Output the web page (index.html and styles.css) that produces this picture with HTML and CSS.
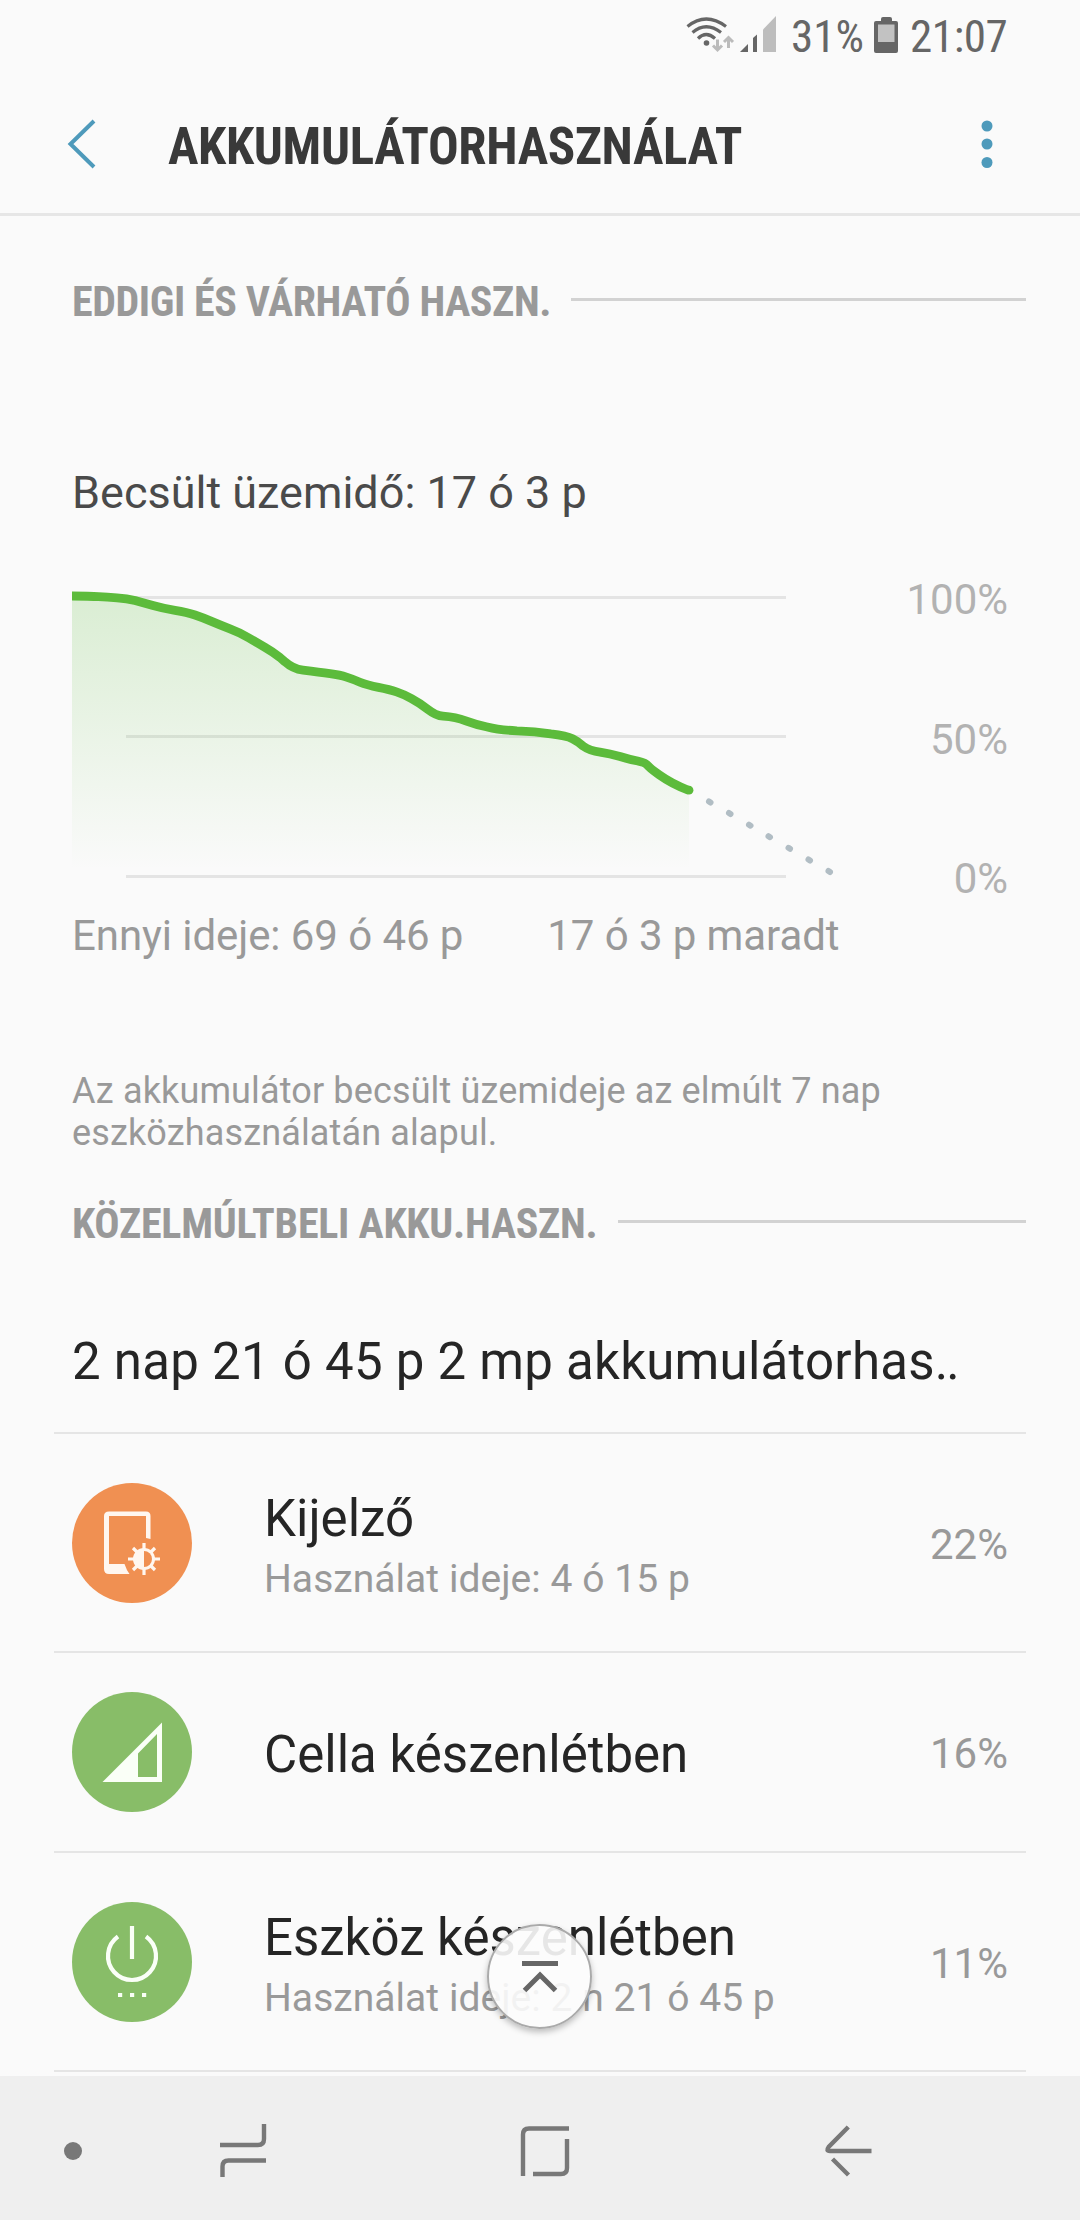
FILE: index.html
```html
<!DOCTYPE html>
<html lang="hu">
<head>
<meta charset="utf-8">
<title>Akkumulátorhasználat</title>
<link rel="stylesheet" href="styles.css">
</head>
<body>
<div class="screen">
  <div class="status">
    <svg class="status-icons" width="92" height="40" viewBox="0 0 92 40">
      <g fill="none" stroke="#666" stroke-width="3.2">
        <path d="M1.500 10.500Q20 -4.500 40 10.500"/>
        <path d="M6.500 16.500Q20 5 35 16.500"/>
        <path d="M12 22.500Q20 14.500 29 22.500"/>
      </g>
      <circle cx="20.500" cy="27" r="2.800" fill="#666"/>
      <g fill="none" stroke="#bbb" stroke-width="3">
        <path d="M31.500 23.500v10M27 29.500l4.500 4.500 4.500-4.500"/>
        <path d="M42.500 32v-10M38 26l4.500-4.500 4.500 4.500"/>
      </g>
      <path d="M54 36h8v-8z" fill="#666"/>
      <path d="M67 36v-14l4-3.500v17.500z" fill="#666"/>
      <path d="M77 36v-22.500l13-13.500v36z" fill="#bdbdbd"/>
    </svg>
    <span class="status-pct">31%</span>
    <svg class="battery" width="24" height="36" viewBox="0 0 24 36">
      <path d="M2 4h5V2a2 2 0 0 1 2-2h7a2 2 0 0 1 2 2v2h4a2 2 0 0 1 2 2v28a2 2 0 0 1-2 2H2a2 2 0 0 1-2-2V6a2 2 0 0 1 2-2z" fill="#666"/>
      <path d="M4 7.500h16.500v17.500H4z" fill="#c2c2c2"/>
    </svg>
    <span class="status-time">21:07</span>
  </div>
  <header class="bar">
    <svg class="back" width="30" height="50" viewBox="0 0 30 50"><path d="M27 2L3.500 25 27 48" fill="none" stroke="#4e9abb" stroke-width="4"/></svg>
    <h1 class="title">AKKUMULÁTORHASZNÁLAT</h1>
    <svg class="more" width="12" height="48" viewBox="0 0 12 48" fill="#4e9abb"><circle cx="6" cy="6" r="5.500"/><circle cx="6" cy="24" r="5.500"/><circle cx="6" cy="42.500" r="5.500"/></svg>
  </header>
  <main>
    <div class="section section-first"><h2 class="section-title">EDDIGI ÉS VÁRHATÓ HASZN.</h2><span class="rule"></span></div>
    <p class="estimate">Becsült üzemidő: 17 ó 3 p</p>
    <div class="chart">
      <svg width="780" height="300" viewBox="60 580 780 300">
        <defs><linearGradient id="fade" gradientUnits="userSpaceOnUse" x1="0" y1="600" x2="0" y2="870"><stop offset="0" stop-color="#5cbc3a" stop-opacity=".2"/><stop offset="1" stop-color="#5cbc3a" stop-opacity="0"/></linearGradient></defs>
        <path d="M126 597.500H786M126 736.500H786M126 876.500H786" stroke="#e4e4e4" stroke-width="3"/>
        <path fill="url(#fade)" d="M72 596L90 596 107 597.300 127 598.300 143 602.700 163 608.500 187 612.300 203 617.700 220 625 240 632.700 257 642.700 273 652 287 663 298 669 320 672.300 340 675 353 679.300 367 685 390 689.700 403 694 420 703.300 438 714.500 456 717.700 475.600 724 499 729 535 732 566.500 735.700 578.400 741.700 590 749.700 610 753.700 630 759.300 645.600 762.700 649.600 768 669 781.700 689 790V870H72z"/>
        <path fill="none" stroke="#5cbb3b" stroke-width="8.800" stroke-linejoin="round" d="M72 596Q90 596 98.500 596.700Q107 597.300 117 597.800Q127 598.300 135 600.500Q143 602.700 153 605.600Q163 608.500 175 610.400Q187 612.300 195 615Q203 617.700 211.500 621.400Q220 625 230 628.900Q240 632.700 248.500 637.700Q257 642.700 265 647.400Q273 652 280 657.500L285 661.800Q293 669 303 670.200Q320 672.300 330 673.700Q340 675 346.500 677.200Q353 679.300 360 682.200Q367 685 378.500 687.400Q390 689.700 396.500 691.900Q403 694 411.500 698.700Q420 703.300 428 709.500Q436 715.700 443 716.200Q456 717 465.800 720.900Q475.600 724.600 487.300 727Q499 730 517 730.800Q535 731.200 550.800 733.900Q566.500 735.700 572.500 738.700Q578.400 741.700 583 746Q590 751 600 752.100Q610 753.700 620 756.500Q630 759.700 637.800 761Q645.600 762.700 647.600 765.400Q649.600 768 659.300 774.900Q672 784 689 790.500"/>
        <circle cx="689" cy="790.200" r="4.400" fill="#5cbb3b"/>
        <path d="M709 801.500l1.500 1M729 813l1.500 1M749 824.700l1.500 1M768.500 836.200l1.500 1M788.500 847.800l1.500 1M808.500 859.500l1.500 1M828.500 871l1.500 1" stroke="#b1bdc4" stroke-width="6" stroke-linecap="round"/>
      </svg>
      <div class="scale"><span>100%</span><span>50%</span><span>0%</span></div>
    </div>
    <div class="legend"><span>Ennyi ideje: 69 ó 46 p</span><span>17 ó 3 p maradt</span></div>
    <p class="note">Az akkumulátor becsült üzemideje az elmúlt 7 nap eszközhasználatán alapul.</p>
    <div class="section section-second"><h2 class="section-title">KÖZELMÚLTBELI AKKU.HASZN.</h2><span class="rule"></span></div>
    <p class="summary">2 nap 21 ó 45 p 2 mp akkumulátorhas<span class="dots">..</span></p>
    <ul class="list">
      <li class="row">
        <svg class="icon" width="120" height="120" viewBox="0 0 120 120">
          <circle cx="60" cy="60" r="60" fill="#f09052"/>
          <path d="M37 28.500h37q4.500 0 4.500 4.500v23l-4.500-1V33H37v48h15.500q2 6 5 10H37q-5 0-5-5V33q0-4.500 5-4.500z" fill="#fff7f0"/>
          <g stroke="#fff7f0" stroke-width="3.200"><path d="M72 60v32M56 76h32M61 65l22 22M83 65L61 87"/></g>
          <circle cx="72" cy="76" r="11" fill="#fff7f0"/>
          <path d="M72 68a8 8 0 0 1 0 16z" fill="#f09052"/>
        </svg>
        <div class="text"><div class="name">Kijelző</div><div class="sub">Használat ideje: 4 ó 15 p</div></div>
        <span class="pct">22%</span>
      </li>
      <li class="row row-short">
        <svg class="icon" width="120" height="120" viewBox="0 0 120 120">
          <circle cx="60" cy="60" r="60" fill="#88bd68"/>
          <path fill-rule="evenodd" d="M30.500 90L90 30.500V90zM66 85h19V42L66 61.500z" fill="#fafff7"/>
        </svg>
        <div class="text"><div class="name">Cella készenlétben</div></div>
        <span class="pct">16%</span>
      </li>
      <li class="row">
        <svg class="icon" width="120" height="120" viewBox="0 0 120 120">
          <circle cx="60" cy="60" r="60" fill="#88bd68"/>
          <path d="M60 24v33M46 34.500a24 24 0 1 0 28 0" fill="none" stroke="#fafff7" stroke-width="4.200"/>
          <path d="M46 91h4.200v4H46zM58 91h4.200v4H58zM70 91h4.200v4H70z" fill="#fafff7"/>
        </svg>
        <div class="text"><div class="name">Eszköz készenlétben</div><div class="sub">Használat ideje: 2 n 21 ó 45 p</div></div>
        <span class="pct">11%</span>
      </li>
    </ul>
  </main>
  <div class="to-top">
    <svg width="36" height="32" viewBox="0 0 36 32" fill="none" stroke="#666"><path d="M0 2.500h36" stroke-width="5"/><path d="M2.500 29.500L18 14l15.500 15.500" stroke-width="5"/></svg>
  </div>
  <nav class="nav">
    <svg width="1080" height="144" viewBox="0 0 1080 144" fill="none" stroke="#787878" stroke-width="4.400">
      <circle cx="73" cy="75" r="9" fill="#787878" stroke="none"/>
      <path d="M220 69h38q6 0 6-6V48M266 84.500h-37.500q-6 0-6 6V101"/>
      <path d="M569 52.500h-40q-6 0-6 6V100M533 98h28q6 0 6-6V63"/>
      <path d="M848.300 51L828.600 71Q825.500 75 830 75H871.500M832.500 83l16 16"/>
    </svg>
  </nav>
</div>
</body>
</html>
```
FILE: styles.css
```css
* { box-sizing: border-box; margin: 0; padding: 0; }
body { background: #fafafa; font-family: Roboto, sans-serif; }
.screen { position: relative; width: 1080px; height: 2220px; overflow: hidden; display: flex; flex-direction: column; background: #fafafa; }

.status { height: 72px; display: flex; align-items: flex-start; padding: 16px 0 0 686px; color: #666; font: 45px/42px "Roboto Condensed", Roboto, sans-serif; }
.status-pct { width: 72px; margin-left: 13px; }
.battery { margin: 1px 12px 0 11px; }
.status-time { white-space: nowrap; letter-spacing: -.4px; }

.bar { height: 144px; display: flex; align-items: center; padding: 3px 87px 0 67px; border-bottom: 3px solid #e6e6e6; }
.title { flex: 1; margin-left: 71px; padding-top: 5px; font: bold 51px/60px "Roboto Condensed", Roboto, sans-serif; letter-spacing: -.35px; color: #393939; white-space: nowrap; }

main { flex: 1; min-height: 0; }
.section { display: flex; align-items: center; padding: 0 54px 0 72px; height: 50px; }
.section-first { margin-top: 59px; }
.section-title { padding-top: 4px; font: bold 42px/50px "Roboto Condensed", Roboto, sans-serif; color: #999; white-space: nowrap; }
.section-first .section-title { letter-spacing: -.42px; }
.section-second .section-title { letter-spacing: -.26px; }
.rule { flex: 1; height: 3px; margin: 0 0 2px 20px; background: #d2d2d2; }
.estimate { margin: 143px 0 0 72px; font-size: 45px; line-height: 50px; color: #4a4a4a; }
.chart { display: flex; margin: 62px 72px 0 60px; height: 300px; }
.scale { flex: 1; display: flex; flex-direction: column; align-items: flex-end; font-size: 42px; line-height: 50px; color: #b2b2b2; margin-top: -5px; gap: 89.500px; }
.legend { display: flex; gap: 84px; padding-left: 72px; margin-top: 31px; font-size: 42px; line-height: 50px; letter-spacing: -.08px; color: #999; }
.note { margin: 109px 180px 0 72px; font-size: 36px; line-height: 42px; letter-spacing: .14px; color: #999; }
.section-second { margin-top: 43px; }
.summary { margin: 85px 0 0 72px; font-size: 51px; line-height: 60px; letter-spacing: .25px; color: #252525; height: 100px; }
.dots { letter-spacing: -2px; }

.list { list-style: none; margin: 0 54px; border-top: 2px solid #e5e5e5; }
.row { height: 219px; display: flex; align-items: center; padding: 0 18px; border-bottom: 2px solid #e5e5e5; }
.row-short { height: 200px; }
.icon { flex: none; }
.text { flex: 1; margin-left: 72px; padding-top: 10px; }
.row-short .text { padding-top: 5px; }
.name { font-size: 51px; line-height: 60px; color: #252525; }
.sub { margin-top: 2px; font-size: 39px; line-height: 56px; letter-spacing: .05px; color: #999; }
.pct { padding-top: 4px; font-size: 42px; line-height: 50px; color: #999; }

.to-top { position: absolute; left: 487px; top: 1924px; width: 105px; height: 105px; border-radius: 50%; border: 2px solid #aaa; background: rgba(252,252,252,.9); box-shadow: 0 3px 6px rgba(0,0,0,.25); display: flex; align-items: center; justify-content: center; }
.nav { height: 144px; flex: none; background: #efefef; }
.nav svg { display: block; }
```
